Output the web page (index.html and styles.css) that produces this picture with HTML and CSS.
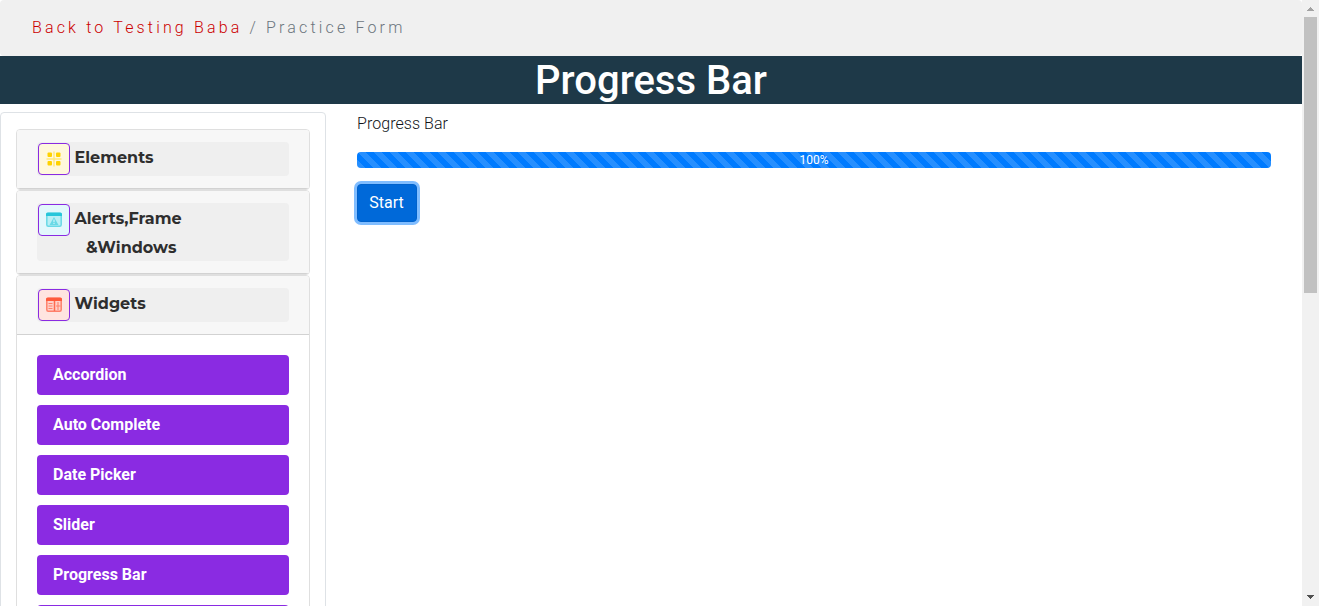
FILE: index.html
```html
<!DOCTYPE html>
<html lang="en">
<head>
<meta charset="utf-8">
<title>Progress Bar</title>
<link rel="stylesheet" href="styles.css">
</head>
<body>
<div class="window">
  <div class="page">
    <nav class="breadcrumb"><a class="crumb-link">Back to Testing Baba</a> / Practice Form</nav>
    <h1 class="title">Progress Bar</h1>
    <div class="columns">
      <aside class="sidebar">
        <section class="card">
          <div class="card-header"><div class="toggle">
            <span class="icon icon-elements"><svg width="16" height="16" viewBox="0 0 16 16"><path d="M8 .5v15M.5 8h15" stroke="#ffe77a" stroke-width="1.4"/><g fill="#ffd200"><rect x="1.500" y="1.500" width="4.500" height="4.500" rx="1"/><rect x="10" y="1.500" width="4.500" height="4.500" rx="1"/><rect x="1.500" y="10" width="4.500" height="4.500" rx="1"/><rect x="10" y="10" width="4.500" height="4.500" rx="1"/></g></svg></span>
            <span class="label">Elements</span>
          </div></div>
        </section>
        <section class="card">
          <div class="card-header"><div class="toggle toggle-tall">
            <span class="icon icon-alerts"><svg width="16" height="16" viewBox="0 0 16 16"><rect x=".8" y="1.500" width="14.400" height="12.700" rx="1.500" fill="#b9eff5" stroke="#68d9e6" stroke-width="1.500"/><path d="M0 4V2Q0 .5 1.500 .5h13Q16 .5 16 2v2z" fill="#26c6da"/><path d="M8 5l4.500 8h-9z" fill="#68d9e6"/><path d="M8 7.500v2.700M8 11v1" stroke="#d5f6fa" stroke-width="1.100"/></svg></span>
            <span class="label">Alerts,Frame<br><span class="second-line">&amp;Windows</span></span>
          </div></div>
        </section>
        <section class="card card-open">
          <div class="card-header"><div class="toggle">
            <span class="icon icon-widgets"><svg width="16" height="16" viewBox="0 0 16 16"><rect x=".8" y="1.500" width="14.400" height="12.700" rx="1.500" fill="#ffd0c9" stroke="#ff806b" stroke-width="1.500"/><path d="M0 4V2Q0 .5 1.500 .5h13Q16 .5 16 2v2z" fill="#ff5a3c"/><path d="M8.500 4v10" stroke="#ff6a50" stroke-width="1.500"/><path d="M2.500 6.500h4M2.500 9h4M2.500 11.500h4M12 5v8" stroke="#ff806b" stroke-width="1.100"/><path d="M10 9h4.500" stroke="#ff806b"/></svg></span>
            <span class="label">Widgets</span>
          </div></div>
          <div class="menu">
            <a class="menu-item">Accordion</a>
            <a class="menu-item">Auto Complete</a>
            <a class="menu-item">Date Picker</a>
            <a class="menu-item">Slider</a>
            <a class="menu-item">Progress Bar</a>
            <a class="menu-item"></a>
          </div>
        </section>
      </aside>
      <main class="content">
        <div class="caption">Progress Bar</div>
        <div class="progress"><div class="progress-fill" style="width:100%">100%</div></div>
        <button class="start">Start</button>
      </main>
    </div>
  </div>
  <div class="scrollbar">
    <svg class="arrow" width="17" height="17" viewBox="0 0 17 17" shape-rendering="crispEdges"><path d="M5 11h7L8.500 7z" fill="#a3a3a3"/></svg>
    <div class="thumb"></div>
    <svg class="arrow arrow-down" width="17" height="17" viewBox="0 0 17 17" shape-rendering="crispEdges"><path d="M5 6h7L8.500 10z" fill="#505050"/></svg>
  </div>
</div>
</body>
</html>
```
FILE: styles.css
```css
* { box-sizing: border-box; }
body { margin: 0; overflow: hidden; background: #fff; color: #212529; font: 400 16px/24px Roboto, sans-serif; }
.window { display: flex; height: 606px; overflow: hidden; }
.page { width: 1302px; height: 606px; overflow: hidden; }
.breadcrumb { height: 56px; padding: 16px 32px; border-radius: 4px; background: #f0f0f0; color: #6c757d; font-weight: 300; letter-spacing: 3.16px; white-space: nowrap; }
.crumb-link { color: #cc0000; }
.title { margin: 0; height: 48px; padding-top: 1px; background: #1e3948; color: #fff; font-size: 40px; font-weight: 500; line-height: 48px; text-align: center; }
.columns { display: flex; }
.sidebar { width: 326px; height: 700px; flex: none; margin-top: 8px; padding: 16px 15px; border: 1px solid #dee2e6; border-radius: 4px; }
.card { border: 1px solid #dfdfdf; border-radius: 4px; overflow: hidden; }
.card-open { height: 500px; }
.card-header { padding: 12px 20px; background: #f7f7f7; border-bottom: 1px solid #d2d2d2; }
.toggle { display: flex; height: 34px; padding: 1px; border-radius: 4px; background: #efefef; }
.toggle-tall { height: 58px; }
.icon { display: flex; flex: none; align-items: center; justify-content: center; width: 32px; height: 32px; border: 1px solid #8a2be2; border-radius: 4px; }
.icon-elements { background: #fff8dc; }
.icon-alerts { background: #e2f8fc; }
.icon-widgets { background: #ffe4e0; }
.label { padding-left: 4.5px; color: #2e2e2e; font: 700 16px/29px Montserrat, Inter, sans-serif; white-space: nowrap; }
.second-line { padding-left: 11.5px; }
.menu { display: flex; flex-direction: column; gap: 10px; padding: 20px; }
.menu-item { height: 40px; padding: 8px 16px; line-height: 23px; border-radius: 4px; background: #8a2be2; color: #fff; font-weight: 700; }
.content { flex: 1; padding: 8px 31px; }
.caption { margin-bottom: 16px; color: #111418; font-weight: 300; letter-spacing: .06px; }
.progress { height: 16px; border-radius: 4px; background: #e9ecef; overflow: hidden; }
.progress-fill { height: 16px; background: #007bff linear-gradient(45deg, rgba(255,255,255,.15) 25%, transparent 25%, transparent 50%, rgba(255,255,255,.15) 50%, rgba(255,255,255,.15) 75%, transparent 75%) 0 0 / 16px 16px; color: #fff; font-size: 12px; line-height: 16px; text-align: center; }
.start { display: block; width: 60px; height: 38px; margin-top: 16px; padding: 0 1px 0 0; border: 1px solid #0062cc; border-radius: 4px; background: #0069d9; box-shadow: 0 0 0 3px #80bdff; color: #fff; font: 400 16px/24px Roboto, sans-serif; }
.scrollbar { display: flex; flex-direction: column; width: 17px; height: 606px; background: #f1f1f1; }
.arrow { display: block; flex: none; }
.thumb { height: 276px; margin: 0 2px; background: #c1c1c1; }
.arrow-down { margin-top: auto; }
```
